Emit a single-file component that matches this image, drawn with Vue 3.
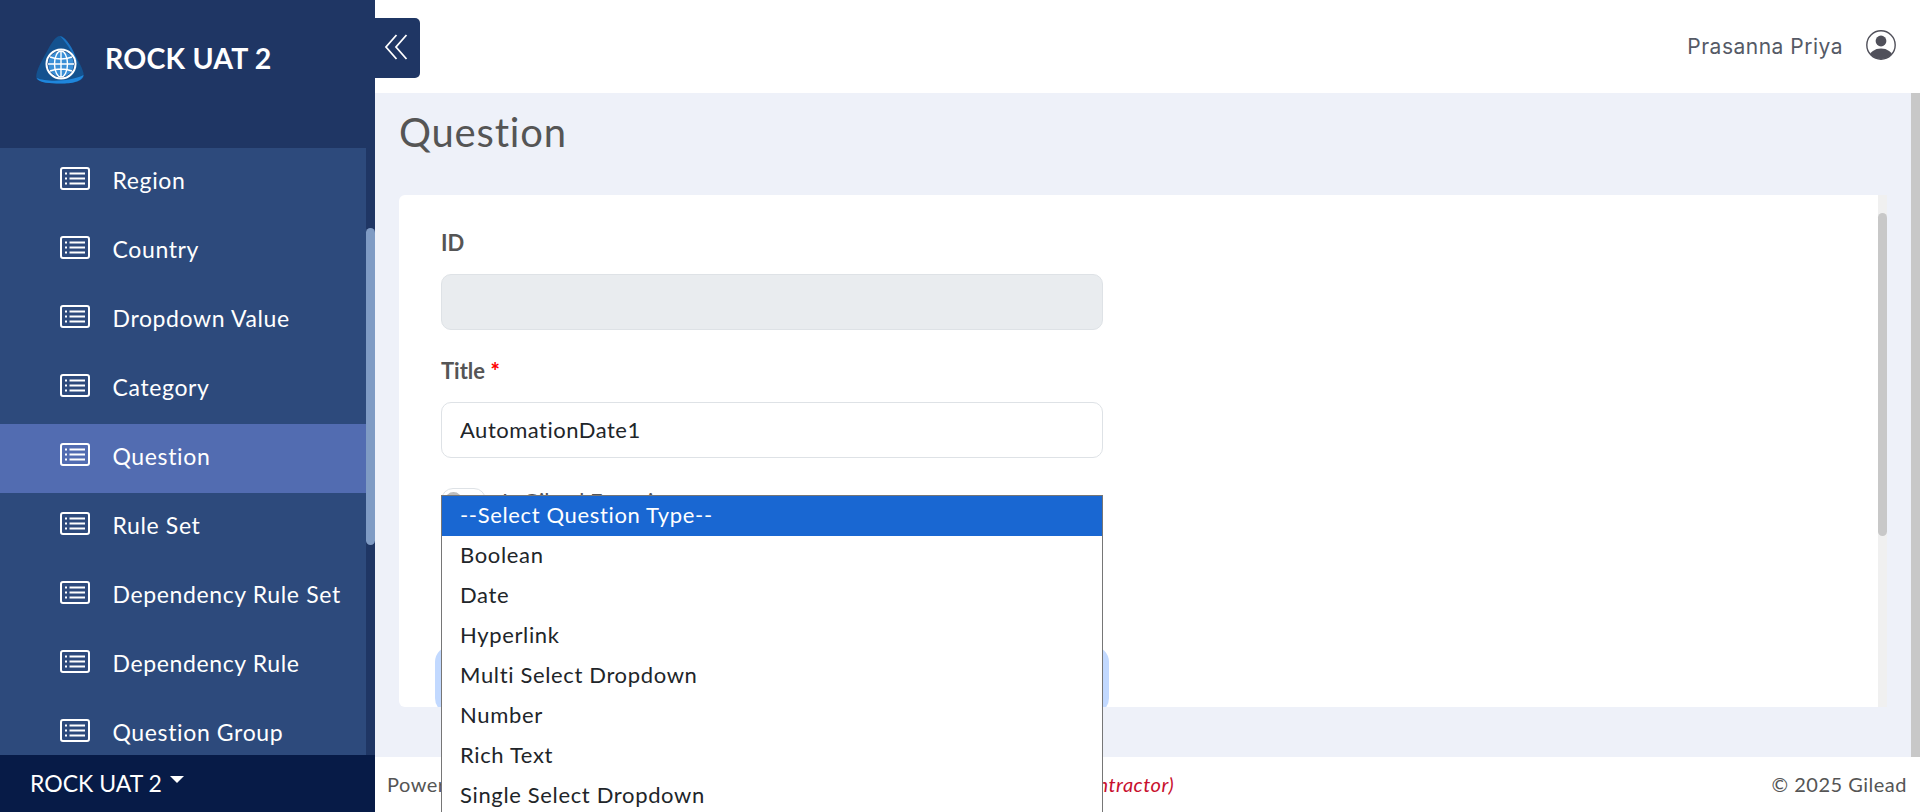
<template>
  <div class="app">
    <aside class="sidebar">
      <div class="brand">
        <svg class="logo" viewBox="0 0 48 48" width="48" height="48">
          <path d="M24 0 C29 0 33 8 38 17 C43 26 49 36 47.5 41 C45 47 32 47.5 24 47.5 C15 47.5 3 47 .5 42 C-1 37 5 26 10 17 C15 8 19 0 24 0 Z" fill="#14528f" />
          <path d="M24 0 C31 2 37 13 40 22 L43 30 C38 20 32 8 24 0 Z" fill="#1c74c4" />
          <path d="M.5 42 C10 46 34 46 47.5 39 C46 47 32 47.5 24 47.5 C15 47.5 3 47 .5 42 Z" fill="#1f86dc" />
          <circle cx="25" cy="28" r="15.5" fill="#fff" />
          <circle cx="25" cy="28" r="13.2" fill="#3a8fd6" stroke="#1b4b86" stroke-width=".8" />
          <g fill="none" stroke="#fff" stroke-width="1.4">
            <ellipse cx="25" cy="28" rx="6.5" ry="13" />
            <path d="M25 15 V41 M12 28 H38 M14 21 Q25 25 36 21 M14 35 Q25 31 36 35" />
          </g>
        </svg>
        <span class="brand-name">ROCK UAT 2</span>
      </div>
      <div class="menu-wrap">
        <ul class="menu">
          <li v-for="item in menu" :key="item" class="menu-item" :class="{ active: item === 'Question' }">
            <svg class="menu-icon" viewBox="0 0 30 23" width="30" height="23">
              <rect x="1" y="1" width="28" height="21" rx="2" fill="none" stroke="currentColor" stroke-width="2" />
              <path d="M9.5 6.5 H25 M9.5 11.5 H25 M9.5 16.5 H25" stroke="currentColor" stroke-width="2" />
              <path d="M5 6.5 H7 M5 11.5 H7 M5 16.5 H7" stroke="currentColor" stroke-width="2" />
            </svg>
            <span>{{ item }}</span>
          </li>
        </ul>
        <div class="menu-track"><div class="menu-thumb"></div></div>
      </div>
      <div class="env">
        <span>ROCK UAT 2</span>
        <i class="caret"></i>
      </div>
    </aside>

    <div class="main">
      <button class="collapse">
        <svg viewBox="0 0 24 26" width="24" height="26" fill="none" stroke="#fff" stroke-width="1.8">
          <path d="M12.5 1 L2 13 L12.5 25 M22.5 1 L12 13 L22.5 25" />
        </svg>
      </button>

      <header class="topbar">
        <span class="user-name">Prasanna Priya</span>
        <svg class="avatar" viewBox="0 0 30 30" width="30" height="30">
          <defs>
            <clipPath id="avatar-clip"><circle cx="15" cy="15" r="14" /></clipPath>
          </defs>
          <circle cx="15" cy="15" r="14.2" fill="none" stroke="#50505a" stroke-width="1.4" />
          <circle cx="15" cy="11" r="5.4" fill="#50505a" />
          <ellipse cx="15" cy="27" rx="11.5" ry="8.5" fill="#50505a" clip-path="url(#avatar-clip)" />
        </svg>
      </header>

      <div class="content">
        <div class="content-inner">
          <h1 class="page-title">Question</h1>
          <div class="card-wrap">
            <form class="card" @submit.prevent>
              <div class="field">
                <label>ID</label>
                <input class="control" type="text" disabled />
              </div>
              <div class="field">
                <label>Title <b class="req">*</b></label>
                <input class="control" type="text" value="AutomationDate1" />
              </div>
              <div class="switch-row">
                <span class="switch"><i class="knob"></i></span>
                <span class="switch-label">Is Gilead Exposing</span>
              </div>
              <div class="type-select"></div>
            </form>
            <div class="card-track"><div class="card-thumb"></div></div>
          </div>
        </div>
        <div class="page-track"></div>
      </div>

      <footer class="footer">
        <span>Powered by Gilead</span>
        <em class="contractor">(Contractor)</em>
        <span class="copy">© 2025 Gilead</span>
      </footer>

      <ul class="dropdown">
        <li v-for="(opt, i) in questionTypes" :key="opt" :class="{ selected: i === 0 }">{{ opt }}</li>
      </ul>
    </div>
  </div>
</template>

<script setup>
const menu = [
  'Region',
  'Country',
  'Dropdown Value',
  'Category',
  'Question',
  'Rule Set',
  'Dependency Rule Set',
  'Dependency Rule',
  'Question Group'
]

const questionTypes = [
  '--Select Question Type--',
  'Boolean',
  'Date',
  'Hyperlink',
  'Multi Select Dropdown',
  'Number',
  'Rich Text',
  'Single Select Dropdown'
]
</script>

<style>
html, body {
  margin: 0;
  overflow: hidden;
}
</style>

<style scoped>
.app {
  display: flex;
  height: 812px;
  overflow: hidden;
  font-family: "Lato", "Open Sans", sans-serif;
  color: #555;
}

.sidebar {
  width: 375px;
  flex-shrink: 0;
  display: flex;
  flex-direction: column;
  background: #1f3664;
  color: #fff;
}

.brand {
  height: 148px;
  flex-shrink: 0;
  box-sizing: border-box;
  padding: 36px 0 0 36px;
  display: flex;
  align-items: flex-start;
  gap: 21px;
}

.brand-name {
  font-size: 28.5px;
  font-weight: 700;
  line-height: 44px;
  letter-spacing: 0.2px;
}

.menu-wrap {
  flex: 1;
  min-height: 0;
  display: flex;
  overflow: hidden;
}

.menu {
  flex: 1;
  margin: 0;
  padding: 0;
  list-style: none;
  background: #2d4a7c;
}

.menu-item {
  height: 69px;
  box-sizing: border-box;
  padding-left: 60px;
  display: flex;
  align-items: center;
  gap: 22.5px;
  font-size: 23px;
  letter-spacing: 0.63px;
}

.menu-item span {
  margin-top: -5px;
}

.menu-item.active {
  background: #526cb1;
}

.menu-icon {
  margin-bottom: 8px;
  flex-shrink: 0;
}

.menu-track {
  width: 9px;
  flex-shrink: 0;
}

.menu-thumb {
  margin-top: 80px;
  height: 317px;
  border-radius: 5px;
  background: #7f9bc4;
}

.env {
  height: 57px;
  flex-shrink: 0;
  box-sizing: border-box;
  padding: 0 0 2px 30px;
  display: flex;
  align-items: center;
  gap: 8px;
  background: #071b47;
  font-size: 23px;
}

.caret {
  width: 0;
  height: 0;
  margin-bottom: 6px;
  border-left: 7px solid transparent;
  border-right: 7px solid transparent;
  border-top: 7px solid #fff;
}

.main {
  flex: 1;
  min-width: 0;
  position: relative;
  display: flex;
  flex-direction: column;
}

.collapse {
  position: absolute;
  left: 0;
  top: 18px;
  width: 45px;
  height: 60px;
  padding: 0 0 0 9px;
  border: none;
  border-radius: 0 5px 5px 0;
  background: #1f3664;
  display: flex;
  align-items: center;
  justify-content: flex-start;
}

.collapse svg {
  margin-top: -3px;
}

.topbar {
  height: 93px;
  flex-shrink: 0;
  box-sizing: border-box;
  padding-right: 24px;
  display: flex;
  align-items: center;
  justify-content: flex-end;
  background: #fff;
}

.user-name {
  font-family: "Inter", sans-serif;
  font-size: 21px;
  letter-spacing: 0.5px;
  color: #555a66;
}

.avatar {
  margin: -4px 0 0 23px;
}

.content {
  flex: 1;
  min-height: 0;
  display: flex;
  background: #eef1f9;
}

.content-inner {
  flex: 1;
  min-width: 0;
  padding: 0 24px 0 24px;
  display: flex;
  flex-direction: column;
}

.page-title {
  margin: 14px 0 0;
  height: 88px;
  font-size: 40px;
  font-weight: 400;
  line-height: 50px;
  letter-spacing: 0.8px;
  color: #555;
}

.card-wrap {
  height: 512px;
  display: flex;
  border-radius: 6px 0 0 6px;
  overflow: hidden;
}

.card {
  flex: 1;
  box-sizing: border-box;
  padding: 30px 0 0 42px;
  background: #fff;
  overflow: hidden;
}

.field {
  width: 662px;
  margin-bottom: 23px;
}

.field label {
  display: block;
  height: 49px;
  font-size: 22px;
  font-weight: 700;
  line-height: 36px;
}

.req {
  color: #f00;
}

.control {
  display: block;
  width: 100%;
  height: 56px;
  box-sizing: border-box;
  padding: 0 18px 2px;
  border: 1px solid #dee2e6;
  border-radius: 10px;
  background: #fff;
  font: inherit;
  font-size: 22px;
  letter-spacing: 0.5px;
  color: #212529;
}

.control:disabled {
  background: #e9ecef;
}

.switch-row {
  display: flex;
  align-items: center;
  gap: 16px;
  height: 28px;
  margin-top: 28px;
}

.switch {
  width: 45px;
  height: 24px;
  box-sizing: border-box;
  border: 1px solid #dee2e6;
  border-radius: 12px;
  display: flex;
  align-items: center;
  padding-left: 3px;
}

.knob {
  width: 17px;
  height: 17px;
  border-radius: 50%;
  background: #bdbdbd;
}

.switch-label {
  font-size: 22px;
}

.type-select {
  width: 662px;
  height: 56px;
  margin-top: 138px;
  box-sizing: border-box;
  border: 1px solid #dee2e6;
  border-radius: 10px;
  background: #fff;
  box-shadow: 0 0 0 6px #c2d9ff;
}

.card-track {
  width: 9px;
  flex-shrink: 0;
  background: #f0f0f0;
}

.card-thumb {
  margin-top: 18px;
  height: 323px;
  border-radius: 5px;
  background: #c8c8c8;
}

.page-track {
  width: 9px;
  flex-shrink: 0;
  background: #c8c8c8;
}

.footer {
  height: 55px;
  flex-shrink: 0;
  box-sizing: border-box;
  padding: 0 13px 2px 12px;
  display: flex;
  align-items: center;
  background: #fff;
  font-size: 20px;
  letter-spacing: 0.5px;
}

.contractor {
  margin-left: 509px;
  color: #c8102e;
}

.copy {
  margin-left: auto;
}

.dropdown {
  position: absolute;
  left: 66px;
  top: 495px;
  width: 662px;
  height: 340px;
  box-sizing: border-box;
  margin: 0;
  padding: 0;
  list-style: none;
  border: 1px solid #767676;
  background: #fff;
  font-size: 22px;
  letter-spacing: 0.65px;
  color: #212529;
}

.dropdown li {
  height: 40px;
  line-height: 38px;
  padding-left: 18px;
}

.dropdown li.selected {
  background: #1967d2;
  color: #fff;
}
</style>
